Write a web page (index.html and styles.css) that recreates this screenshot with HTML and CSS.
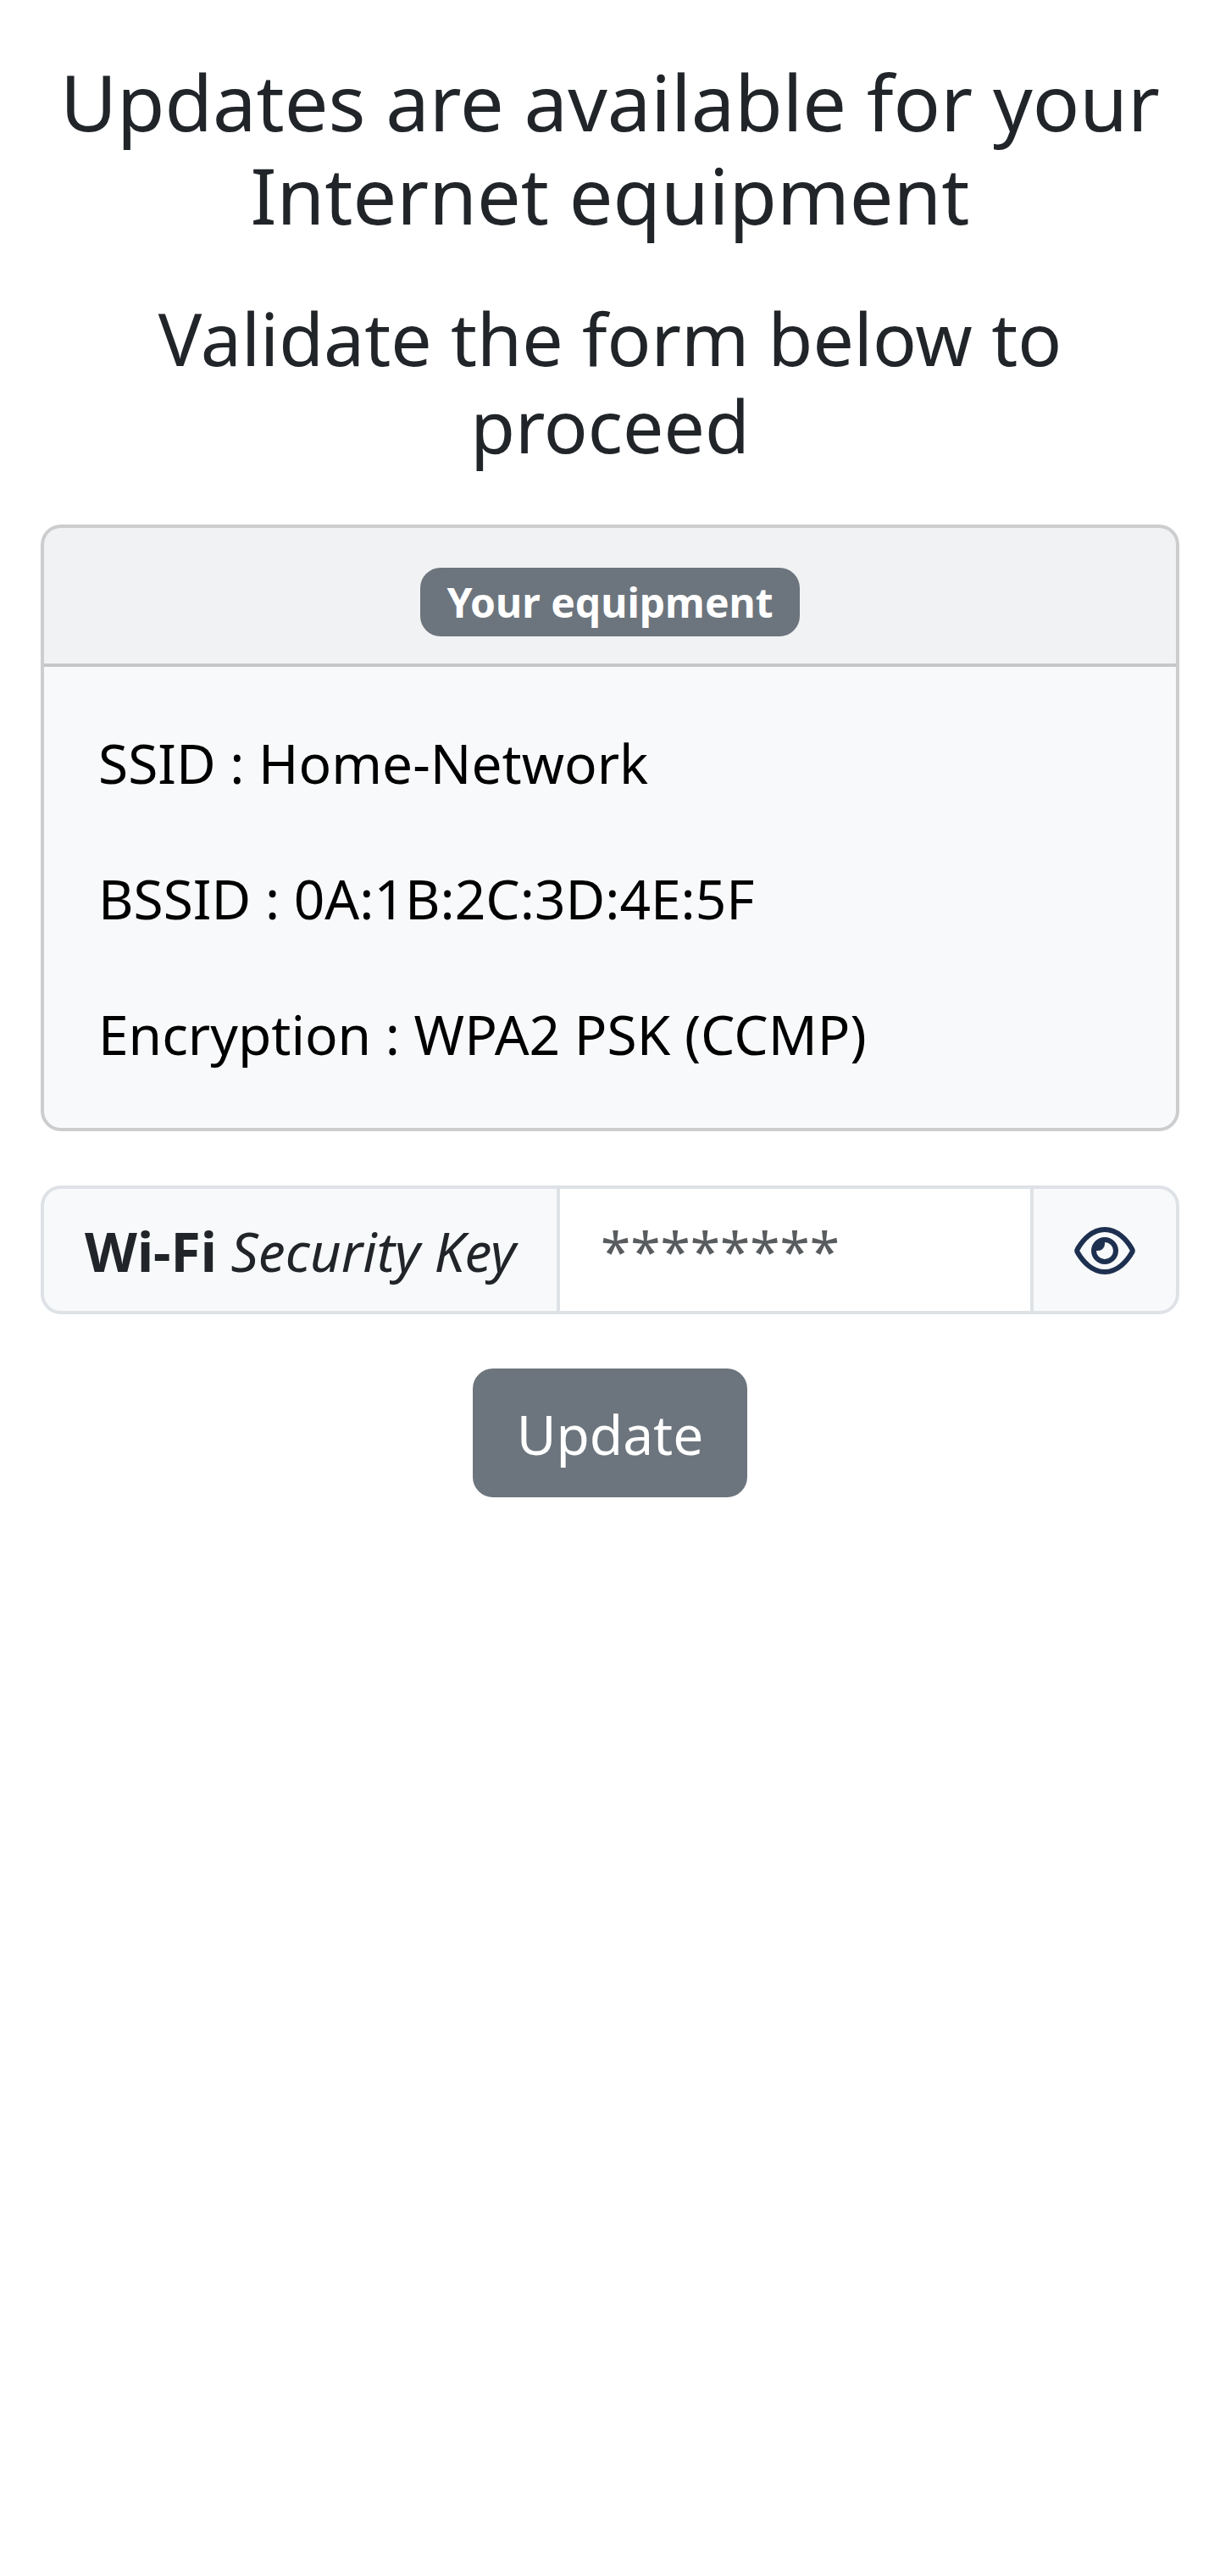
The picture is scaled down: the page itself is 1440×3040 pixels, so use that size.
FILE: index.html
```
<!DOCTYPE html>
<html lang="en">
<head>
<meta charset="utf-8">
<title>Updates available</title>
<link rel="stylesheet" href="styles.css">
</head>
<body>
<main class="container">
  <h1 class="title">Updates are available for your Internet equipment</h1>
  <h2 class="subtitle">Validate the form below to proceed</h2>
  <section class="card">
    <div class="card-header"><span class="badge">Your equipment</span></div>
    <div class="card-body">
      <p>SSID : Home-Network</p>
      <p>BSSID : 0A:1B:2C:3D:4E:5F</p>
      <p>Encryption : WPA2 PSK (CCMP)</p>
    </div>
  </section>
  <form class="form">
    <div class="input-group">
      <label class="input-label" for="key"><strong>Wi-Fi</strong>&nbsp;<em>Security Key</em></label>
      <input class="input" id="key" type="text" placeholder="********">
      <span class="toggle">
        <svg class="eye" viewBox="0 0 24 24" fill="none" stroke="#1e3050" stroke-width="2">
          <path d="M1.25 11.4C3.3 7.8 7 3.67 12 3.67S20.7 7.8 22.75 11.4Q23.1 12 22.75 12.6C20.7 16.2 17 20.33 12 20.33S3.3 16.2 1.25 12.6Q.9 12 1.25 11.4Z"/>
          <circle cx="12" cy="12" r="4.33"/>
          <path d="M12 8v1.33A2.67 2.67 0 0 1 9.33 12H8A4 4 0 0 1 12 8Z" fill="#1e3050" stroke="none"/>
        </svg>
      </span>
    </div>
    <button class="button" type="button">Update</button>
  </form>
</main>
</body>
</html>
```
FILE: styles.css
```
* { box-sizing: border-box; }
html { font-size: 64px; }
body {
  margin: 0;
  background: #fff;
  color: #212529;
  font: 400 1rem/1.5 "Noto Sans", sans-serif;
}
.container { padding: 65px .75rem 0; }
.title, .subtitle { margin: 0; font-weight: 400; line-height: 1.2; text-align: center; }
.title { margin-bottom: 61.5px; font-size: 91.84px; }
.subtitle { margin-bottom: 65.5px; font-size: 85.92px; }
.card { border: 4px solid rgba(0, 0, 0, .175); border-radius: 24px; background: #f8f9fa; color: #000; }
.card-header {
  padding: 34px 1rem 30px;
  border-bottom: 4px solid rgba(0, 0, 0, .175);
  border-radius: 20px 20px 0 0;
  background: rgba(33, 37, 41, .03);
  text-align: center;
}
.badge {
  display: inline-block;
  padding: .35em .65em;
  border-radius: 24px;
  background: #6c757d;
  color: #fff;
  font-size: .75em;
  font-weight: 700;
  line-height: 1;
}
.card-body { padding: 66px 1rem 62px; }
.card-body p { margin: 0 0 1rem; }
.card-body p:last-child { margin-bottom: 0; }
.form { display: flex; flex-direction: column; align-items: center; }
.input-group { display: flex; width: 100%; margin: 1rem 0; }
.input-label, .toggle {
  display: flex;
  align-items: center;
  padding: 26px .75rem 22px;
  border: 4px solid #dee2e6;
  background: #f8f9fa;
  white-space: nowrap;
}
.input-label { border-radius: 24px 0 0 24px; }
.input {
  flex: 1;
  min-width: 0;
  margin: 0 -4px;
  padding: 26px .75rem 22px;
  border: 4px solid #dee2e6;
  border-radius: 0;
  background: #fff;
  color: #212529;
  font: inherit;
}
.input::placeholder { color: rgba(33, 37, 41, .75); opacity: 1; }
.toggle { border-radius: 0 24px 24px 0; }
.eye { width: 72px; height: 72px; margin-bottom: 1px; }
.button {
  padding: 26px .75rem 22px;
  border: 4px solid #6c757d;
  border-radius: 24px;
  background: #6c757d;
  color: #fff;
  font: inherit;
}
```
